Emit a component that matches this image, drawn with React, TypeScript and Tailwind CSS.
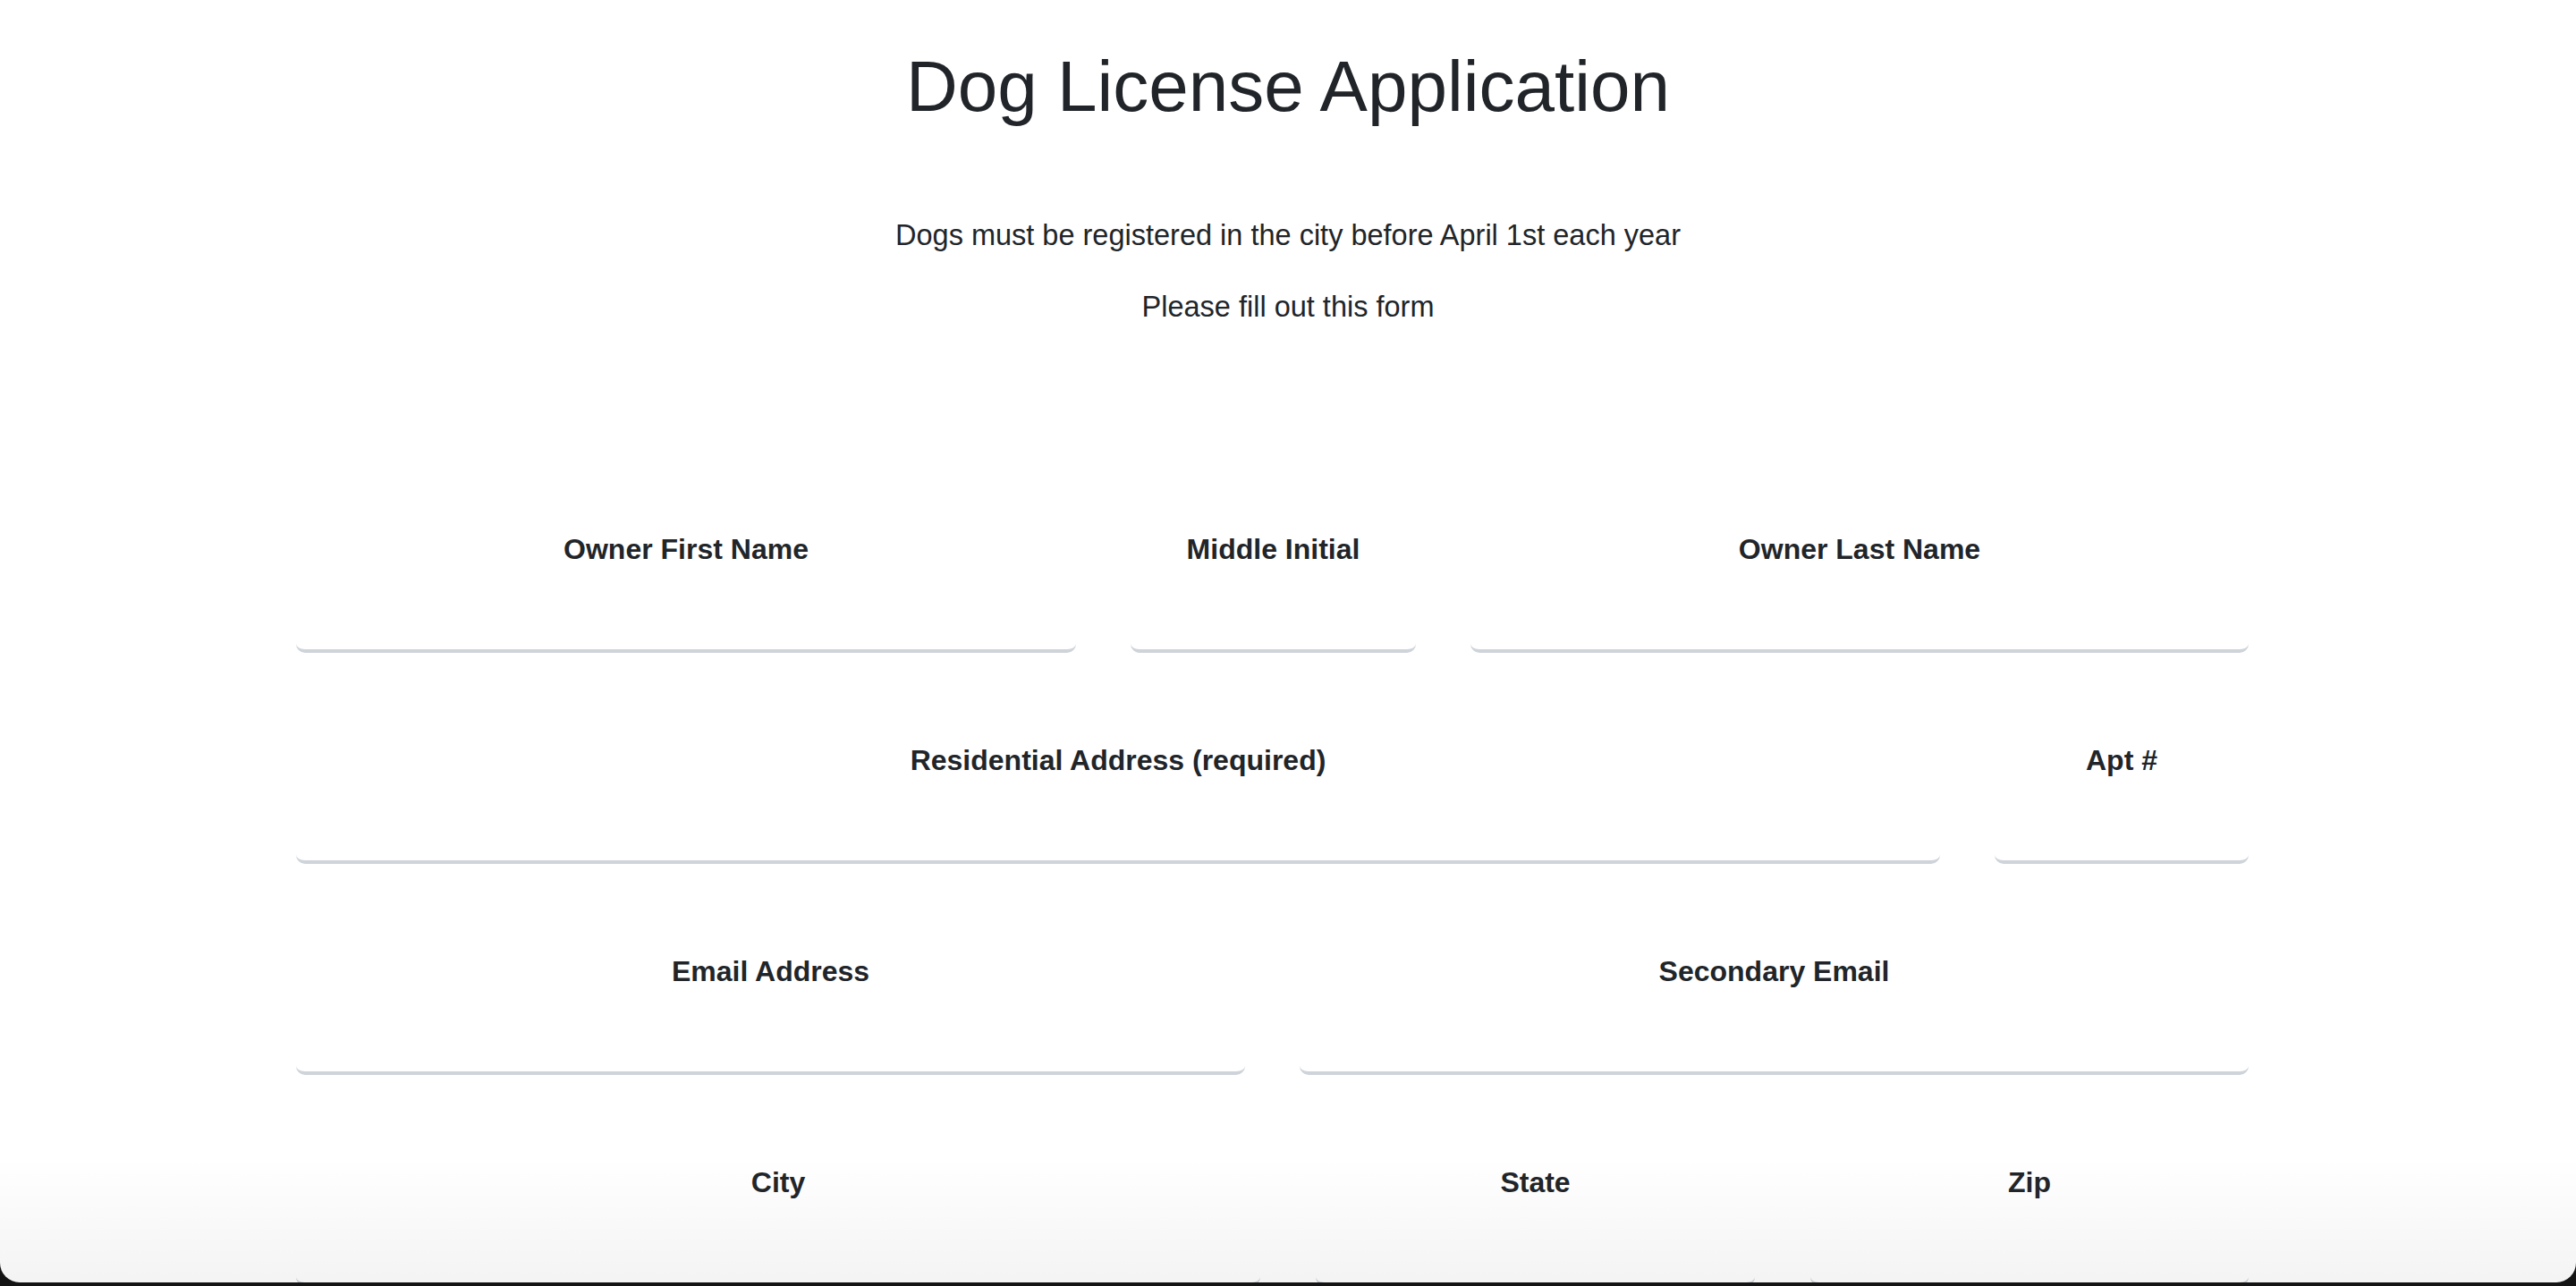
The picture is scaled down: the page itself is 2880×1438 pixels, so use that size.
import React from 'react'

type Field = { label: string; width: string }

const rows: Field[][] = [
  [
    { label: 'Owner First Name', width: 'w-[872px]' },
    { label: 'Middle Initial', width: 'w-[319px]' },
    { label: 'Owner Last Name', width: 'w-[870px]' },
  ],
  [
    { label: 'Residential Address (required)', width: 'w-[1838px]' },
    { label: 'Apt #', width: 'w-[284px]' },
  ],
  [
    { label: 'Email Address', width: 'w-[1061px]' },
    { label: 'Secondary Email', width: 'w-[1061px]' },
  ],
  [
    { label: 'City', width: 'w-[1078px]' },
    { label: 'State', width: 'w-[491px]' },
    { label: 'Zip', width: 'w-[490px]' },
  ],
]

function FormField({ label, width }: Field) {
  return (
    <div className={`flex flex-col ${width}`}>
      <label className="text-center text-[32px] leading-[48px] font-bold text-[#212529]">
        {label}
      </label>
      <input
        type="text"
        className="mt-[24px] h-[68px] w-full rounded-[10px] border-b-4 border-[#ced4da] bg-white px-4 text-[28px] outline-none"
      />
    </div>
  )
}

export default function App() {
  return (
    <div className="h-[1438px] w-full bg-[#141414]" style={{ fontFamily: '"Liberation Sans", Arial, sans-serif' }}>
      <div className="relative h-[1434px] w-full overflow-hidden rounded-b-[22px] bg-white text-[#212529]">
        <header className="flex flex-col items-center pt-[49px]">
          <h1 className="text-[80px] leading-[96px] font-medium">Dog License Application</h1>
          <p className="mt-[94px] text-[32.5px] leading-[48px]">
            Dogs must be registered in the city before April 1st each year
          </p>
          <p className="mt-[32px] text-[32.5px] leading-[48px]">Please fill out this form</p>
        </header>

        <div className="flex justify-center pr-[35px]">
          <form className="mt-[223px] flex w-[2183px] flex-col gap-[96px]">
            {rows.map((row, i) => (
              <div key={i} className="flex justify-between">
                {row.map(f => (
                  <FormField key={f.label} {...f} />
                ))}
              </div>
            ))}
          </form>
        </div>

        {/* window bottom shading */}
        <div className="pointer-events-none absolute inset-x-0 bottom-0 h-[140px] bg-linear-to-b from-transparent to-black/[0.045]" />
      </div>
    </div>
  )
}
